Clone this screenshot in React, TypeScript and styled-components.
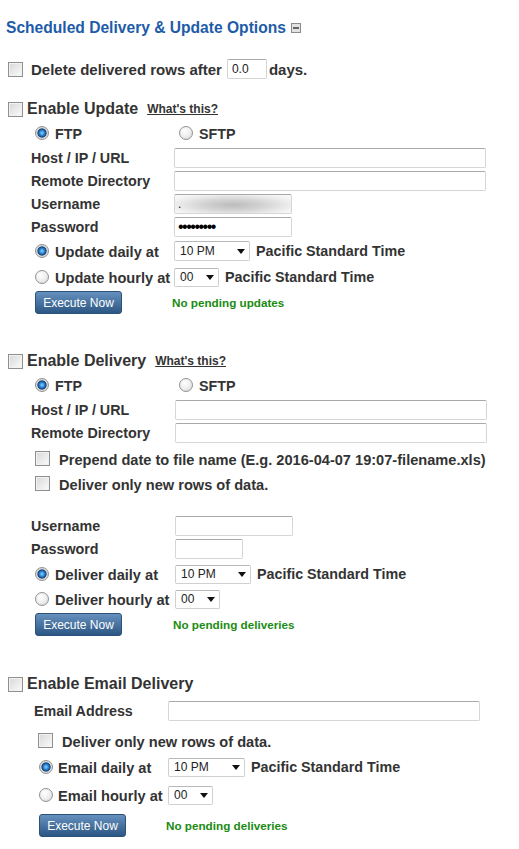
import styled, { createGlobalStyle } from "styled-components";

const GlobalStyle = createGlobalStyle`
  body {
    margin: 0;
    background: #fff;
    font-family: "Liberation Sans", Arial, sans-serif;
    color: #333;
  }
`;

const Page = styled.div`
  width: 519px;
  padding: 18px 0 20px 0;
  box-sizing: border-box;
`;

const Title = styled.h2`
  margin: 0 0 0 6px;
  display: flex;
  align-items: center;
  gap: 5px;
  font-size: 15.6px;
  line-height: 20px;
  font-weight: bold;
  color: #1d5ca8;
`;

const CollapseIcon = styled.span`
  width: 10px;
  height: 10px;
  box-sizing: border-box;
  border: 1px solid #8c8c8c;
  background: #e2e2e2;
  display: flex;
  align-items: center;
  justify-content: center;
  &::before {
    content: "";
    width: 6px;
    height: 2px;
    background: #666;
  }
`;

const Check = styled.input.attrs({ type: "checkbox" })`
  appearance: none;
  margin: 0;
  flex: none;
  width: 15px;
  height: 15px;
  box-sizing: border-box;
  border: 1px solid #8e8f8f;
  background: linear-gradient(135deg, #d8d8d8, #fbfbfb);
  box-shadow: inset 0 0 0 1px #f2f2f2;
`;

const Radio = styled.input.attrs({ type: "radio" })`
  appearance: none;
  margin: 0;
  flex: none;
  width: 14px;
  height: 14px;
  border-radius: 50%;
  box-sizing: border-box;
  border: 1px solid #929292;
  background: radial-gradient(circle at 40% 35%, #fff 0%, #ececec 55%, #cdcdcd 100%);
  &:checked {
    background: radial-gradient(
      circle at 50% 50%,
      #8fd0ff 0,
      #2a86d6 2.5px,
      #123f72 4.2px,
      #dcdcdc 5px,
      #c8c8c8 100%
    );
  }
`;

const DeleteRow = styled.div`
  margin: 21px 0 0 8px;
  height: 20px;
  display: flex;
  align-items: center;
  font-size: 15px;
  font-weight: bold;
  span {
    margin-left: 8px;
  }
`;

const SmallBox = styled.input`
  width: 40px;
  height: 20px;
  box-sizing: border-box;
  margin: 0 2px 0 5px;
  padding: 0 4px;
  border: 1px solid #d4d4d4;
  border-top-color: #a9a9a9;
  border-radius: 2px;
  font: 12px "Liberation Sans", Arial, sans-serif;
  color: #222;
`;

const SectionHead = styled.div<{ $top: number }>`
  margin: ${(p) => p.$top}px 0 0 8px;
  height: 16px;
  display: flex;
  align-items: center;
`;

const HeadText = styled.span`
  margin-left: 4px;
  font-size: 16px;
  font-weight: bold;
`;

const WhatsThis = styled.a`
  margin-left: 9px;
  font-size: 12px;
  font-weight: bold;
  color: #333;
  text-decoration: underline;
  cursor: pointer;
`;

const Body = styled.div<{ $indent: number; $label: number }>`
  padding-left: ${(p) => p.$indent}px;
  --label-w: ${(p) => p.$label}px;
`;

const Line = styled.div<{ $top: number; $h?: number }>`
  display: grid;
  grid-template-columns: var(--label-w) 1fr;
  align-items: center;
  margin-top: ${(p) => p.$top}px;
  height: ${(p) => p.$h ?? 20}px;
  font-size: 14.3px;
  font-weight: bold;
`;

const FullLine = styled.div<{ $top: number; $offset: number }>`
  display: flex;
  align-items: center;
  gap: 9px;
  height: 20px;
  margin: ${(p) => p.$top}px 0 0 ${(p) => p.$offset}px;
  font-size: 14.6px;
  font-weight: bold;
  span {
    padding-top: 4px;
  }
`;

const Choice = styled.label<{ $offset: number; $gap?: number }>`
  display: flex;
  align-items: center;
  gap: ${(p) => p.$gap ?? 6}px;
  margin-left: ${(p) => p.$offset}px;
  white-space: nowrap;
  span {
    padding-top: 2px;
  }
`;

const ChoiceText = styled.span<{ $big?: boolean }>`
  font-size: ${(p) => (p.$big ? 14.6 : 14.3)}px;
`;

const TextBox = styled.input<{ $w: number; $blurred?: boolean }>`
  width: ${(p) => p.$w}px;
  height: 20px;
  box-sizing: border-box;
  margin: 0;
  padding: 0 3px;
  border: 1px solid #d6d6d6;
  border-top-color: #a9a9a9;
  border-radius: 2px;
  font: 12px "Liberation Sans", Arial, sans-serif;
  color: #111;
  background: ${(p) =>
    p.$blurred
      ? "radial-gradient(ellipse 60% 70% at 50% 55%, #bcbcbc 0%, #d4d4d4 45%, #ececec 80%, #f7f7f7 100%)"
      : "#fff"};
  &[type="password"] {
    font-size: 16px;
    letter-spacing: -1.5px;
    color: #000;
  }
`;

const Schedule = styled.div`
  display: flex;
  align-items: center;
`;

const SelectWrap = styled.div`
  position: relative;
  display: flex;
  &::after {
    content: "";
    position: absolute;
    right: 5px;
    top: 50%;
    margin-top: -2px;
    border-left: 4.5px solid transparent;
    border-right: 4.5px solid transparent;
    border-top: 5px solid #111;
    pointer-events: none;
  }
`;

const Select = styled.select<{ $w: number; $h?: number }>`
  appearance: none;
  width: ${(p) => p.$w}px;
  height: ${(p) => p.$h ?? 19}px;
  margin: 0;
  padding: 0 0 0 5px;
  box-sizing: border-box;
  border: 1px solid #d0d0d0;
  border-top-color: #b8b8b8;
  border-radius: 2px;
  background: #fff;
  font: 12px "Liberation Sans", Arial, sans-serif;
  color: #222;
`;

const Zone = styled.span`
  margin-left: 6px;
  white-space: nowrap;
  font-size: 14.3px;
`;

const ExecuteButton = styled.button<{ $offset: number }>`
  margin-left: ${(p) => p.$offset}px;
  width: 87px;
  height: 23px;
  padding: 0;
  border: 1px solid #2b5079;
  border-radius: 3px;
  background: linear-gradient(#6690bd, #2c5684);
  color: #fff;
  font: 12px "Liberation Sans", Arial, sans-serif;
  cursor: pointer;
`;

const Status = styled.span<{ $shift: number }>`
  margin-left: ${(p) => p.$shift}px;
  font-size: 11.7px;
  font-weight: bold;
  color: #1a8c12;
`;

const hours = ["12 AM", "1 AM", "2 AM", "10 PM", "11 PM"];
const minutes = ["00", "15", "30", "45"];

type ScheduleProps = {
  name: string;
  label: string;
  daily?: boolean;
  zone?: boolean;
  offset: number;
  gap?: number;
  w: number;
  h?: number;
};

const ScheduleLine = ({ name, label, daily, zone, offset, gap, w, h }: ScheduleProps) => (
  <>
    <Choice $offset={offset} $gap={gap}>
      <Radio name={name} defaultChecked={daily} />
      <ChoiceText $big>{label}</ChoiceText>
    </Choice>
    <Schedule>
      <SelectWrap>
        <Select $w={w} $h={h} defaultValue={daily ? "10 PM" : "00"}>
          {(daily ? hours : minutes).map((v) => (
            <option key={v}>{v}</option>
          ))}
        </Select>
      </SelectWrap>
      {zone && <Zone>Pacific Standard Time</Zone>}
    </Schedule>
  </>
);

const App = () => {
  return (
    <Page>
      <GlobalStyle />
      <Title>
        Scheduled Delivery &amp; Update Options
        <CollapseIcon />
      </Title>

      <DeleteRow>
        <Check />
        <span>Delete delivered rows after</span>
        <SmallBox defaultValue="0.0" />
        days.
      </DeleteRow>

      {/* update */}
      <SectionHead $top={22}>
        <Check />
        <HeadText>Enable Update</HeadText>
        <WhatsThis>What's this?</WhatsThis>
      </SectionHead>
      <Body $indent={31} $label={143}>
        <Line $top={6}>
          <Choice $offset={4}>
            <Radio name="upProto" defaultChecked />
            <ChoiceText>FTP</ChoiceText>
          </Choice>
          <Choice $offset={5}>
            <Radio name="upProto" />
            <ChoiceText>SFTP</ChoiceText>
          </Choice>
        </Line>
        <Line $top={5}>
          <span>Host / IP / URL</span>
          <TextBox $w={312} />
        </Line>
        <Line $top={3}>
          <span>Remote Directory</span>
          <TextBox $w={312} />
        </Line>
        <Line $top={3}>
          <span>Username</span>
          <TextBox $w={118} $blurred defaultValue="." />
        </Line>
        <Line $top={3}>
          <span>Password</span>
          <TextBox $w={118} type="password" defaultValue="secretpwd" />
        </Line>
        <Line $top={3} $h={22}>
          <ScheduleLine name="upWhen" label="Update daily at" daily zone offset={4} w={76} h={20} />
        </Line>
        <Line $top={4} $h={22}>
          <ScheduleLine name="upWhen" label="Update hourly at" zone offset={4} w={45} />
        </Line>
        <Line $top={3} $h={23}>
          <ExecuteButton $offset={4}>Execute Now</ExecuteButton>
          <Status $shift={-2}>No pending updates</Status>
        </Line>
      </Body>

      {/* delivery */}
      <SectionHead $top={39}>
        <Check />
        <HeadText>Enable Delivery</HeadText>
        <WhatsThis>What's this?</WhatsThis>
      </SectionHead>
      <Body $indent={31} $label={144}>
        <Line $top={6}>
          <Choice $offset={4}>
            <Radio name="dlProto" defaultChecked />
            <ChoiceText>FTP</ChoiceText>
          </Choice>
          <Choice $offset={4}>
            <Radio name="dlProto" />
            <ChoiceText>SFTP</ChoiceText>
          </Choice>
        </Line>
        <Line $top={5}>
          <span>Host / IP / URL</span>
          <TextBox $w={312} />
        </Line>
        <Line $top={3}>
          <span>Remote Directory</span>
          <TextBox $w={312} />
        </Line>
        <FullLine $top={5} $offset={4}>
          <Check />
          <span>Prepend date to file name (E.g. 2016-04-07 19:07-filename.xls)</span>
        </FullLine>
        <FullLine $top={5} $offset={4}>
          <Check />
          <span>Deliver only new rows of data.</span>
        </FullLine>
        <Line $top={23}>
          <span>Username</span>
          <TextBox $w={118} />
        </Line>
        <Line $top={3}>
          <span>Password</span>
          <TextBox $w={68} type="password" />
        </Line>
        <Line $top={4} $h={22}>
          <ScheduleLine name="dlWhen" label="Deliver daily at" daily zone offset={4} w={76} />
        </Line>
        <Line $top={3} $h={22}>
          <ScheduleLine name="dlWhen" label="Deliver hourly at" offset={4} w={45} />
        </Line>
        <Line $top={3} $h={23}>
          <ExecuteButton $offset={4}>Execute Now</ExecuteButton>
          <Status $shift={-2}>No pending deliveries</Status>
        </Line>
      </Body>

      {/* email */}
      <SectionHead $top={40}>
        <Check />
        <HeadText>Enable Email Delivery</HeadText>
      </SectionHead>
      <Body $indent={34} $label={134}>
        <Line $top={9}>
          <span>Email Address</span>
          <TextBox $w={312} />
        </Line>
        <FullLine $top={9} $offset={4}>
          <Check />
          <span>Deliver only new rows of data.</span>
        </FullLine>
        <Line $top={6} $h={22}>
          <ScheduleLine name="emWhen" label="Email daily at" daily zone offset={5} gap={5} w={77} />
        </Line>
        <Line $top={6} $h={22}>
          <ScheduleLine name="emWhen" label="Email hourly at" offset={5} gap={5} w={45} />
        </Line>
        <Line $top={8} $h={23}>
          <ExecuteButton $offset={5}>Execute Now</ExecuteButton>
          <Status $shift={-2}>No pending deliveries</Status>
        </Line>
      </Body>
    </Page>
  );
};

export default App;
